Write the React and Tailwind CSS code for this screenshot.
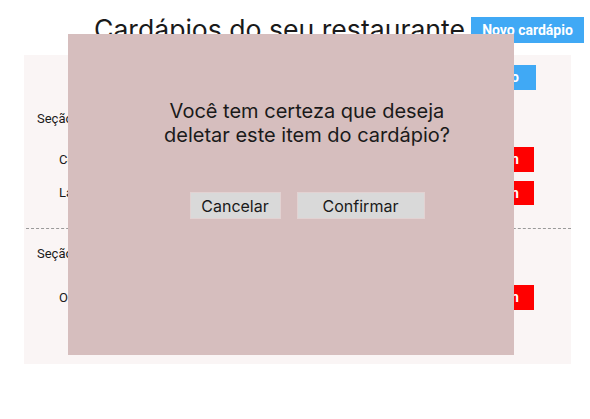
export default function App() {
  return (
    <div className="relative w-[590px] h-[419px] bg-white overflow-hidden text-[#1a1a1a]" style={{ fontFamily: "Roboto, 'Liberation Sans', sans-serif" }}>
      <div className="flex items-start pl-[94px] pt-[13px] h-[55px]">
        <h1 className="text-[26.6px] leading-[32px] font-normal" style={{ fontFamily: "Inter, 'Liberation Sans', sans-serif" }}>
          Cardápios do seu restaurante
        </h1>
        <button className="ml-[6px] mt-[4px] h-[26px] w-[113px] bg-[#40a9f5] text-white text-[14px] font-bold">
          Novo cardápio
        </button>
      </div>
      <div className="mx-[24px] w-[547px] h-[309px] bg-[#faf5f5] pt-[10px] text-[13px]">
        <div className="flex justify-end pr-[35px]">
          <button className="h-[25px] pl-[10px] pr-[17px] bg-[#40a9f5] text-white text-[14px] font-bold">Nova seção</button>
        </div>
        <div className="pl-[13px] mt-[20px] h-[18px] leading-[18px]">Seção 1</div>
        <div className="mt-[19px] flex flex-col gap-[9px]">
          <div className="flex items-center justify-between pl-[35px] pr-[37px] h-[25px]">
            <span>Coxinha</span>
            <button className="h-[25px] pl-[10px] pr-[15px] bg-[#ff0000] text-white text-[14px] font-bold">Deletar item</button>
          </div>
          <div className="flex items-center justify-between pl-[35px] pr-[37px] h-[24px]">
            <span>Lasanha</span>
            <button className="h-[24px] pl-[10px] pr-[15px] bg-[#ff0000] text-white text-[14px] font-bold">Deletar item</button>
          </div>
        </div>
        <div className="mt-[23px] ml-[2px] border-t border-dashed border-[#9a9a9a]"></div>
        <div className="pl-[13px] mt-[16px] h-[18px] leading-[18px]">Seção 2</div>
        <div className="mt-[22px] flex items-center justify-between pl-[35px] pr-[37px] h-[25px]">
          <span>Omelete</span>
          <button className="h-[25px] pl-[10px] pr-[15px] bg-[#ff0000] text-white text-[14px] font-bold">Deletar item</button>
        </div>
      </div>
      <div className="absolute left-[68px] top-[34px] w-[446px] h-[321px] bg-[#d6bebe] flex flex-col items-center pl-[32px] pt-[65px]" style={{ fontFamily: "Inter, 'Liberation Sans', sans-serif" }}>
        <p className="text-[20px] leading-[24px] text-center text-[#1a1a1a]">
          Você tem certeza que deseja<br />deletar este item do cardápio?
        </p>
        <div className="mt-[45px] flex gap-[16px]">
          <button className="w-[91px] h-[27px] bg-[#d9d9d9] border border-[#e2d2d2] text-[16px] text-[#1a1a1a]">Cancelar</button>
          <button className="w-[128px] h-[27px] bg-[#d9d9d9] border border-[#e2d2d2] text-[16px] text-[#1a1a1a]">Confirmar</button>
        </div>
      </div>
    </div>
  );
}
